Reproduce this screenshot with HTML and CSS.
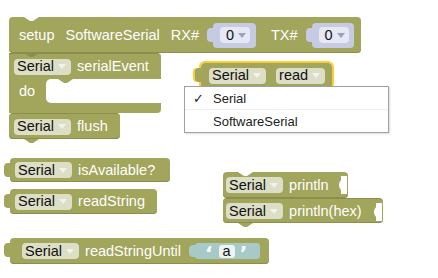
FILE: index.html
```html
<!DOCTYPE html>
<html>
<head>
<meta charset="utf-8">
<link rel="stylesheet" href="styles.css">
</head>
<body>
<div class="ws">
  <div class="block stmt top-notch setup">
    <span class="lbl">setup</span>
    <span class="lbl">SoftwareSerial</span>
    <span class="lbl">RX#</span>
    <span class="vin"><span class="dd num">0<i class="tri"></i></span></span>
    <span class="lbl tx">TX#</span>
    <span class="vin vin2"><span class="dd num">0<i class="tri"></i></span></span>
  </div>

  <div class="cblock">
    <div class="crow"><span class="dd">Serial<i class="tri"></i></span><span class="lbl">serialEvent</span></div>
    <div class="cmid"><div class="carm"><span class="lbl">do</span></div><div class="chole"></div></div>
    <div class="cbot"></div>
  </div>

  <div class="block stmt next-tab flush">
    <span class="dd">Serial<i class="tri"></i></span><span class="lbl">flush</span>
  </div>

  <div class="block out avail">
    <span class="dd">Serial<i class="tri"></i></span><span class="lbl">isAvailable?</span>
  </div>

  <div class="block out rstr">
    <span class="dd">Serial<i class="tri"></i></span><span class="lbl">readString</span>
  </div>

  <div class="block out selected rd">
    <span class="dd">Serial<i class="tri"></i></span><span class="dd">read<i class="tri"></i></span>
  </div>

  <div class="block stmt top-notch pln">
    <span class="dd">Serial<i class="tri"></i></span><span class="lbl">println</span>
    <svg class="sock" width="8" height="18" viewBox="0 0 8 18"><path d="M8 0H1v4c0 1-2 1.5-2 5s2 4 2 5v4h7z" fill="#fff" transform="translate(1 0)"/></svg>
  </div>

  <div class="block stmt next-tab plnh">
    <span class="dd">Serial<i class="tri"></i></span><span class="lbl">println(hex)</span>
    <svg class="sock" width="8" height="18" viewBox="0 0 8 18"><path d="M8 0H1v4c0 1-2 1.5-2 5s2 4 2 5v4h7z" fill="#fff" transform="translate(1 0)"/></svg>
  </div>

  <div class="block out rsu">
    <span class="dd">Serial<i class="tri"></i></span><span class="lbl">readStringUntil</span>
    <span class="tin"><span class="q">‘</span><span class="tval">a</span><span class="q">’</span></span>
  </div>

  <div class="menu">
    <div class="item"><span class="chk">✓</span>Serial</div>
    <div class="sep"></div>
    <div class="item">SoftwareSerial</div>
  </div>
</div>
</body>
</html>
```

FILE: styles.css
```css
body {
  margin: 0;
  background: #fff;
}

.ws {
  position: relative;
  width: 438px;
  height: 278px;
  overflow: hidden;
  font-family: "Liberation Sans", Arial, sans-serif;
  font-size: 14.5px;
}

.block {
  position: absolute;
  display: flex;
  align-items: center;
  box-sizing: border-box;
  background: #a2a55c;
  border-radius: 4px;
  color: #fff;
  padding-left: 5px;
  box-shadow: inset 0 -1px 0 #8b8e4d;
}

.lbl {
  white-space: nowrap;
  line-height: 1;
}

.dd {
  display: inline-flex;
  align-items: center;
  height: 16px;
  padding: 0 5px 0 3px;
  background: #dcdec6;
  color: #111;
  border-radius: 4px;
  line-height: 1;
  white-space: nowrap;
}

.tri {
  display: inline-block;
  width: 0;
  height: 0;
  margin-left: 4px;
  border-left: 4px solid transparent;
  border-right: 4px solid transparent;
  border-top: 5px solid #f3f3ec;
}

.dd + .lbl {
  margin-left: 6px;
}

.dd + .dd {
  margin-left: 10px;
}

/* previous-connection notch cut into the top */
.top-notch::before {
  content: "";
  position: absolute;
  left: 15px;
  top: 0;
  width: 15px;
  height: 4px;
  background: #fff;
  clip-path: polygon(0 0, 100% 0, 60% 100%, 40% 100%);
}

/* next-connection tab hanging below */
.next-tab::after {
  content: "";
  position: absolute;
  left: 15px;
  bottom: -4px;
  width: 15px;
  height: 4px;
  background: #a2a55c;
  clip-path: polygon(0 0, 100% 0, 60% 100%, 40% 100%);
}

/* output puzzle tab on the left */
.out::before {
  content: "";
  position: absolute;
  left: -6px;
  top: 5px;
  width: 7px;
  height: 14px;
  background: inherit;
  border-radius: 4px 0 0 4px;
}

/* setup block */
.setup {
  left: 9px;
  top: 17px;
  width: 352px;
  height: 36px;
  padding-left: 10px;
}

.setup .lbl + .lbl {
  margin-left: 11px;
}

.setup::after {
  content: "";
  position: absolute;
  left: 15px;
  bottom: -4px;
  width: 15px;
  height: 4px;
  background: #8b8e4d;
  clip-path: polygon(0 0, 100% 0, 60% 100%, 40% 100%);
  z-index: 2;
}

.vin {
  position: relative;
  display: flex;
  align-items: center;
  box-sizing: border-box;
  width: 43px;
  height: 25px;
  margin-left: 14px;
  padding: 0 6px 0 7px;
  background: #c6cae2;
  border-radius: 4px;
}

.vin::before {
  content: "";
  position: absolute;
  left: -6px;
  top: 5px;
  width: 7px;
  height: 14px;
  background: inherit;
  border-radius: 4px 0 0 4px;
}

.vin2 {
  width: 42px;
}

.dd.num {
  box-sizing: border-box;
  width: 30px;
  padding: 0 4px 0 6px;
  background: #e6e8f3;
}

.dd.num .tri {
  border-top-color: #9aa0c0;
  margin-left: 4px;
}

.tx {
  margin-left: 15px;
}

/* C-shaped serialEvent block */
.cblock {
  position: absolute;
  left: 9px;
  top: 53px;
  width: 152px;
  color: #fff;
}

.crow {
  display: flex;
  align-items: center;
  height: 26px;
  padding-left: 5px;
  background: #a2a55c;
  border-radius: 0 4px 0 0;
  border-top: 1px solid #8b8e4d;
  box-sizing: border-box;
}

.cmid {
  display: flex;
  height: 24px;
  background: #a2a55c;
}

.carm {
  display: flex;
  align-items: center;
  width: 37px;
  padding-left: 10px;
  box-sizing: border-box;
}

.chole {
  position: relative;
  flex: 1;
  background: #fff;
  border-radius: 5px 0 0 5px;
}

.chole::before {
  content: "";
  position: absolute;
  left: 12px;
  top: 0;
  width: 15px;
  height: 4px;
  background: #a2a55c;
  clip-path: polygon(0 0, 100% 0, 60% 100%, 40% 100%);
}

.cbot {
  height: 10px;
  background: #a2a55c;
  border-radius: 0 0 4px 0;
}

.flush {
  left: 9px;
  top: 113px;
  width: 111px;
  height: 26px;
  border-top: 1px solid #8b8e4d;
}

.avail {
  left: 10px;
  top: 158px;
  width: 160px;
  height: 24px;
}

.rstr {
  left: 10px;
  top: 189px;
  width: 147px;
  height: 25px;
}

.rd {
  left: 201px;
  top: 63px;
  width: 131px;
  height: 25px;
  padding-left: 8px;
  outline: 2px solid #fc3;
  outline-offset: 0;
}

.rd::before {
  box-shadow: -2px 0 0 #fc3;
}

.pln {
  left: 223px;
  top: 172px;
  width: 125px;
  height: 26px;
  padding-left: 3px;
}

.plnh {
  left: 223px;
  top: 198px;
  width: 160px;
  height: 25px;
  padding-left: 3px;
  border-top: 1px solid #8b8e4d;
}

.sock {
  position: absolute;
  right: 1px;
  top: 4px;
}

.rsu {
  left: 10px;
  top: 238px;
  width: 259px;
  height: 26px;
  padding-left: 12px;
}

.tin {
  position: relative;
  display: flex;
  align-items: center;
  box-sizing: border-box;
  width: 65px;
  height: 16px;
  margin-left: 14px;
  padding-left: 10px;
  background: #a7c9c7;
  border-radius: 3px;
  color: #fff;
}

.tin::before {
  content: "";
  position: absolute;
  left: -6px;
  top: 2px;
  width: 7px;
  height: 12px;
  background: inherit;
  border-radius: 4px 0 0 4px;
}

.q {
  font-family: "DejaVu Sans", sans-serif;
  font-size: 20px;
  font-weight: bold;
  line-height: 1;
  margin-top: 4px;
}

.tval {
  display: inline-flex;
  align-items: center;
  height: 13px;
  margin: 0 5px 0 6px;
  padding: 0 4px;
  background: #eef3f3;
  color: #111;
  border-radius: 3px;
  line-height: 1;
}

/* dropdown menu */
.menu {
  position: absolute;
  left: 184px;
  top: 86px;
  width: 205px;
  height: 47px;
  box-sizing: border-box;
  background: #fff;
  border: 1px solid #a0a0a0;
  box-shadow: 1px 1px 2px rgba(0, 0, 0, 0.15);
  font-size: 13px;
  color: #222;
  z-index: 5;
}

.item {
  display: flex;
  align-items: center;
  height: 22px;
  padding-left: 28px;
  position: relative;
}

.chk {
  position: absolute;
  left: 8px;
  font-size: 13px;
}

.sep {
  height: 1px;
  background: #f0f0f0;
}
```
